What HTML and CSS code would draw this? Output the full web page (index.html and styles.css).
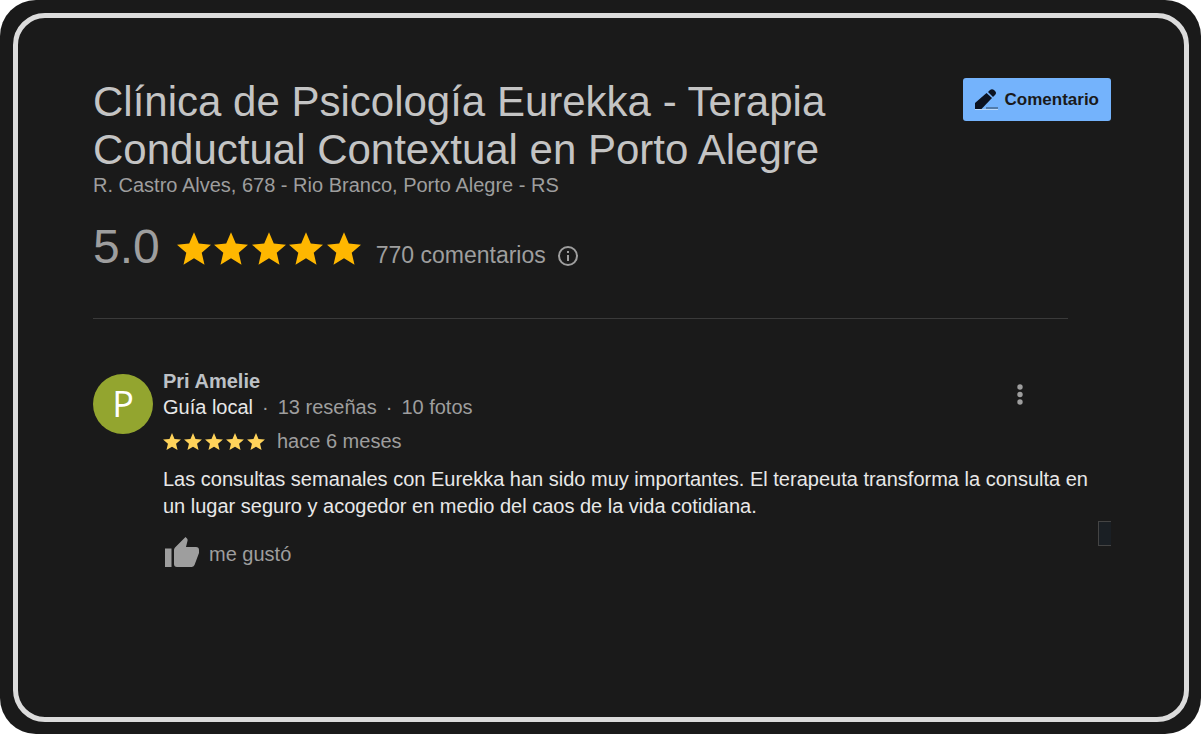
FILE: index.html
```
<!DOCTYPE html>
<html lang="es">
<head>
    <meta charset="UTF-8">
    <meta name="viewport" content="width=device-width, initial-scale=1.0">
    <title>Clínica de Psicología Eurekka</title>
    <link rel="stylesheet" href="styles.css">
</head>
<body>

<svg class="defs" aria-hidden="true">
    <symbol id="star" viewBox="2 2 20 19">
        <path d="M12 17.270L18.180 21l-1.640-7.030L22 9.240l-7.190-.610L12 2 9.190 8.630 2 9.240l5.460 4.730L5.820 21z"/>
    </symbol>
</svg>

<div class="page">
    <main class="card">
        <header class="header">
            <div class="place">
                <h1 class="title">Clínica de Psicología Eurekka - Terapia Conductual Contextual en Porto Alegre</h1>
                <p class="address">R. Castro Alves, 678 - Rio Branco, Porto Alegre - RS</p>
            </div>
            <button class="comment-button" type="button">
                <svg class="pencil" viewBox="0 0 24 22" aria-hidden="true">
                    <path d="M0 20v-6L11.500 4l5.500 5L6.500 20z" fill="#0b1220"/>
                    <path d="M13 3l2-2q2-1.500 4 0l1 1q2 2 0 4l-2 2z" fill="#0b1220"/>
                    <path d="M11 19h12" stroke="#46698f" stroke-width="1.500"/>
                    <path d="M0 20.500h23" stroke="#b9d8fb"/>
                </svg>
                Comentario
            </button>
        </header>

        <div class="summary">
            <span class="score">5.0</span>
            <span class="stars" role="img" aria-label="5 estrellas">
                <svg><use href="#star"/></svg>
                <svg><use href="#star"/></svg>
                <svg><use href="#star"/></svg>
                <svg><use href="#star"/></svg>
                <svg><use href="#star"/></svg>
            </span>
            <span class="count">770 comentarios</span>
            <svg class="info" viewBox="0 0 20 20" aria-hidden="true">
                <circle cx="10" cy="10" r="9" fill="none" stroke="#9e9e9e" stroke-width="2"/>
                <path d="M9 5h2v2H9zM9 9h2v6H9z" fill="#9e9e9e"/>
            </svg>
        </div>

        <article class="review">
            <div class="avatar">P</div>
            <div class="review-body">
                <div class="review-head">
                    <div>
                        <h2 class="name">Pri Amelie</h2>
                        <p class="meta">
                            <span class="guide">Guía local</span>
                            <span>·</span>
                            <span>13 reseñas</span>
                            <span>·</span>
                            <span>10 fotos</span>
                        </p>
                    </div>
                    <button class="menu-button" type="button" aria-label="Más opciones">
                        <svg viewBox="0 0 6 21" aria-hidden="true">
                            <circle cx="3" cy="3" r="2.700"/>
                            <circle cx="3" cy="10.500" r="2.700"/>
                            <circle cx="3" cy="18" r="2.700"/>
                        </svg>
                    </button>
                </div>
                <div class="rating">
                    <span class="stars small" role="img" aria-label="5 estrellas">
                        <svg><use href="#star"/></svg>
                        <svg><use href="#star"/></svg>
                        <svg><use href="#star"/></svg>
                        <svg><use href="#star"/></svg>
                        <svg><use href="#star"/></svg>
                    </span>
                    <span>hace 6 meses</span>
                </div>
                <p class="text">Las consultas semanales con Eurekka han sido muy importantes. El terapeuta transforma la consulta en un lugar seguro y acogedor en medio del caos de la vida cotidiana.</p>
                <button class="like-button" type="button">
                    <svg viewBox="0 0 34 30" aria-hidden="true">
                        <path d="M0 11.500h6.500V30H0zM9 13q0-1.500 1-2.500L20.500 0l1.500 1.500q.8.900.6 2L21 10h10q3 0 3 3v3l-4.500 12q-.9 2-3 2H12q-3 0-3-3z"/>
                    </svg>
                    <span>me gustó</span>
                </button>
            </div>
        </article>
        <span class="tab"></span>
    </main>
</div>

</body>
</html>
```
FILE: styles.css
```
* {
    box-sizing: border-box;
}
body {
    margin: 0;
    background-color: #fff;
    color: #9e9e9e;
    font-family: "Liberation Sans", Arial, sans-serif;
    font-size: 20px;
}
h1, h2, p {
    margin: 0;
    font-weight: normal;
}
button {
    padding: 0;
    border: none;
    background: none;
    color: inherit;
    font: inherit;
    cursor: pointer;
}
.defs {
    display: none;
}
.page {
    display: flex;
    min-height: 100vh;
    padding: 13px 12px 12px 13px;
    border-radius: 36px;
    background-color: #1a1a1a;
}
.card {
    position: relative;
    flex: 1;
    padding: 60px 73px 60px 75px;
    border: 5px solid #dcdcdc;
    border-radius: 32px;
}
.header {
    display: flex;
    justify-content: space-between;
    align-items: flex-start;
}
.title {
    max-width: 780px;
    color: #c4c4c4;
    font-size: 42px;
    line-height: 48px;
}
.address {
    line-height: 22px;
}
.comment-button {
    display: flex;
    align-items: center;
    gap: 6px;
    height: 43px;
    padding: 0 12px;
    border-radius: 3px;
    background-color: #74b3fc;
    color: #1a1a1a;
    font-size: 17px;
    font-weight: bold;
}
.pencil {
    width: 24px;
    height: 22px;
}
.summary {
    display: flex;
    align-items: center;
    margin: 20px 43px 0 0;
    padding-bottom: 40px;
    border-bottom: 1px solid #3a3a3a;
}
.score {
    margin-right: 17px;
    font-size: 48px;
    line-height: 62px;
}
.stars {
    display: flex;
    justify-content: space-between;
    width: 184px;
    padding-top: 3px;
    fill: #ffb700;
}
.stars svg {
    width: 34px;
    height: 33px;
}
.stars.small {
    width: 102px;
    padding-top: 0;
    fill: #ffd35a;
}
.stars.small svg {
    width: 18px;
    height: 17px;
}
.count {
    margin: 17px 12px 0 15px;
    font-size: 23px;
}
.info {
    width: 20px;
    height: 20px;
    margin-top: 17px;
}
.review {
    display: flex;
    gap: 10px;
    margin: 49px 20px 0 0;
}
.avatar {
    flex: none;
    width: 60px;
    height: 60px;
    margin-top: 6px;
    border-radius: 50%;
    background-color: #93a52f;
    color: #fff;
    font-family: "Open Sans", sans-serif;
    font-size: 36px;
    line-height: 60px;
    text-align: center;
}
.review-body {
    flex: 1;
}
.review-head {
    display: flex;
    justify-content: space-between;
    align-items: center;
    padding-right: 68px;
}
.name {
    color: #bdc1c6;
    font-size: 20px;
    font-weight: bold;
    line-height: 26px;
}
.meta {
    display: flex;
    gap: 9px;
    line-height: 26px;
}
.guide {
    color: #e8e8e8;
}
.menu-button svg {
    display: block;
    width: 6px;
    height: 21px;
    fill: #9e9e9e;
}
.rating {
    display: flex;
    align-items: center;
    gap: 12px;
    margin-top: 8px;
    line-height: 26px;
}
.text {
    margin-top: 12px;
    color: #e8e8e8;
    line-height: 27px;
}
.like-button {
    display: flex;
    align-items: center;
    gap: 10px;
    margin: 17px 0 0 2px;
}
.like-button svg {
    width: 34px;
    height: 30px;
    fill: #9e9e9e;
}
.like-button span {
    padding-top: 5px;
}
.tab {
    position: absolute;
    top: 503px;
    right: 73px;
    width: 13px;
    height: 25px;
    border: 1px solid #444;
    border-right: none;
    background-color: #1a1f24;
}
```
